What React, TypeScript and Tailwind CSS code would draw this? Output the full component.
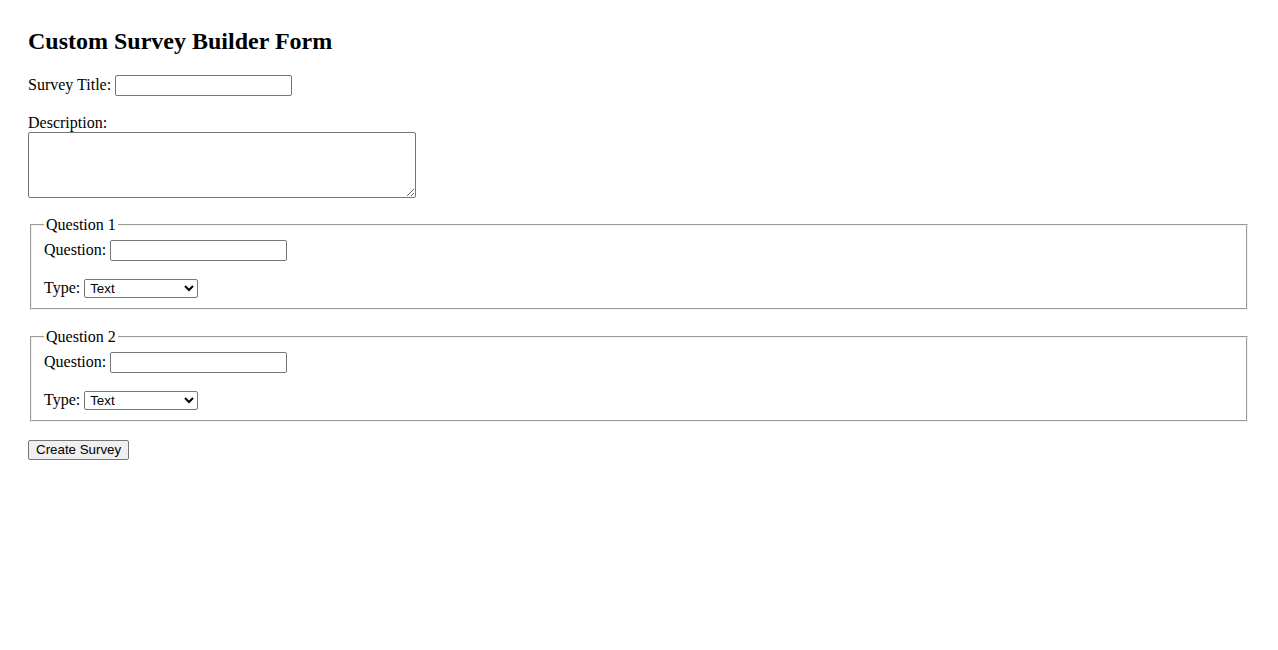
import React from "react";

const control =
  "font-['Liberation_Sans',Arial,sans-serif] text-[13.33px] leading-[normal] border border-[#767676] rounded-[2px] bg-white text-black";

const QuestionBox = ({ num }: { num: number }) => {
  return (
    <fieldset className="mx-[2px] mt-[18px] border-2 border-[#f0f0f0] [border-style:groove] px-[12px] pt-[6px] pb-[10px]">
      <legend className="px-[2px]">Question {num}</legend>
      <div>
        <label>Question:</label>{" "}
        <input type="text" className={`${control} inline-block h-[21px] w-[177px] px-[2px] align-baseline`} />
      </div>
      <div className="mt-[18px]">
        <label>Type:</label>{" "}
        <select defaultValue="text" className={`${control} inline-block h-[19px] w-[114px] pl-[1px] align-baseline`}>
          <option value="text">Text</option>
          <option value="multiple">Multiple Choice</option>
          <option value="rating">Rating</option>
        </select>
      </div>
    </fieldset>
  );
};

export default function App() {
  return (
    <div className="min-h-screen bg-white px-[28px] pt-[28px] font-['Liberation_Serif','Times_New_Roman',serif] text-[16px] leading-[normal] text-black">
      <h2 className="mb-[0.83em] text-[24px] font-bold">Custom Survey Builder Form</h2>

      <div>
        <label>Survey Title:</label>{" "}
        <input type="text" className={`${control} inline-block h-[21px] w-[177px] px-[2px] align-baseline`} />
      </div>

      <div className="mt-[18px]">
        <label>Description:</label>
        <textarea className={`${control} block h-[66px] w-[388px] resize p-[2px]`} />
      </div>

      <div className="mt-[18px]">
        <QuestionBox num={1} />
        <QuestionBox num={2} />
      </div>

      <button
        type="button"
        className="mt-[18px] h-[20px] rounded-[2px] border border-[#767676] bg-[#efefef] px-[7px] font-['Liberation_Sans',Arial,sans-serif] text-[13.33px] leading-[normal] text-black"
      >
        Create Survey
      </button>
    </div>
  );
}
